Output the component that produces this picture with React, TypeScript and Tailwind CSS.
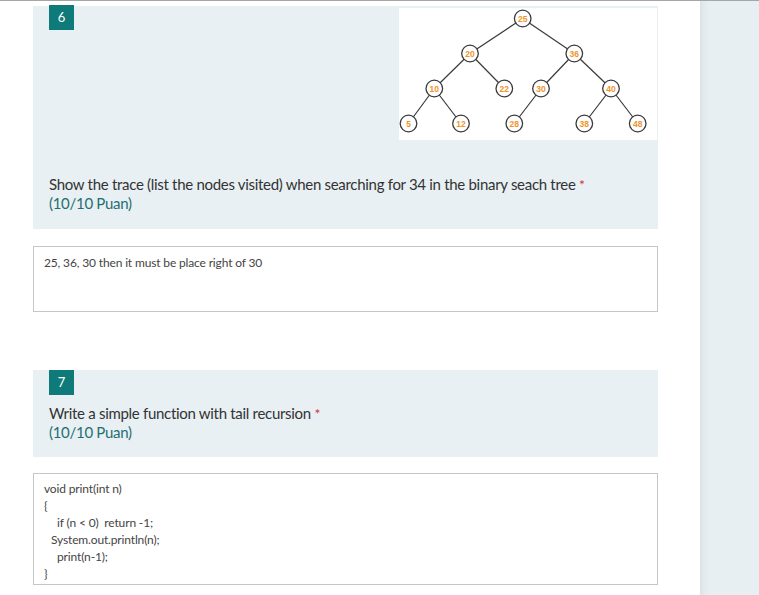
import React from 'react';

const nodes: { v: string; x: number; y: number }[] = [
  { v: '25', x: 123.7, y: 10.5 },
  { v: '20', x: 71, y: 45.5 },
  { v: '36', x: 175.3, y: 45.5 },
  { v: '10', x: 35.3, y: 80.5 },
  { v: '22', x: 105.3, y: 80.5 },
  { v: '30', x: 142, y: 80.5 },
  { v: '40', x: 212, y: 80.5 },
  { v: '5', x: 9.5, y: 115.5 },
  { v: '12', x: 62, y: 115.5 },
  { v: '28', x: 115.3, y: 115.5 },
  { v: '38', x: 185.3, y: 115.5 },
  { v: '48', x: 238.7, y: 115.5 },
];

const edges: [string, string][] = [
  ['25', '20'], ['25', '36'], ['20', '10'], ['20', '22'], ['36', '30'], ['36', '40'],
  ['10', '5'], ['10', '12'], ['30', '28'], ['40', '38'], ['40', '48'],
];

function Tree() {
  const at = (v: string) => nodes.find((n) => n.v === v)!;
  return (
    <svg width="258" height="132" viewBox="0 0 258 132" className="block bg-white">
      {edges.map(([a, b]) => (
        <line key={a + b} x1={at(a).x} y1={at(a).y} x2={at(b).x} y2={at(b).y} stroke="#3a3a3a" strokeWidth="1.2" />
      ))}
      {nodes.map((n) => (
        <g key={n.v}>
          <circle cx={n.x} cy={n.y} r="8.3" fill="#fff" stroke="#3a3a3a" strokeWidth="1.3" />
          <text
            x={n.x}
            y={n.y + 3}
            textAnchor="middle"
            fontSize="8.5"
            fontWeight="700"
            fill="#f0932b"
            fontFamily="'Liberation Sans', Arial, sans-serif"
          >
            {n.v}
          </text>
        </g>
      ))}
    </svg>
  );
}

function Badge({ n }: { n: string }) {
  return (
    <div className="ml-4 w-[25px] h-[25px] bg-[#0e7a7a] text-white text-[13px] flex items-center justify-center">
      {n}
    </div>
  );
}

function Title({ text }: { text: string }) {
  return (
    <div className="pl-4 text-[15px] leading-[19px] tracking-[-0.3px] text-[#333]">
      <div className="whitespace-nowrap">
        {text} <span className="text-[#d13438] text-[14px] leading-[0]">*</span>
      </div>
      <div className="text-[#1f6f72]">(10/10 Puan)</div>
    </div>
  );
}

export default function App() {
  return (
    <div className="min-h-screen flex bg-white border-t border-[#a6a6a6] font-['Lato','Noto_Sans',sans-serif]">
      <main className="w-[700px] shrink-0 pl-[33px] pr-[42px] pt-[4px]">
        {/* Question 6 */}
        <section className="bg-[#e8f0f3] pb-[16px] mt-[1px]">
          <div className="flex justify-between items-start">
            <div className="-mt-[1px]">
              <Badge n="6" />
            </div>
            <div className="mt-[2px] mr-[1px]">
              <Tree />
            </div>
          </div>
          <div className="mt-[35px]">
            <Title text="Show the trace (list the nodes visited) when searching for 34 in the binary seach tree" />
          </div>
        </section>

        <div className="mt-[17px] h-[66px] border border-[#c6c6c6] px-[10px] pt-[7px] text-[12px] leading-[17px] tracking-[-0.15px] text-[#444]">
          25, 36, 30 then it must be place right of 30
        </div>

        {/* Question 7 */}
        <section className="mt-[58px] bg-[#e8f0f3] pb-[15px]">
          <Badge n="7" />
          <div className="mt-[9px]">
            <Title text="Write a simple function with tail recursion" />
          </div>
        </section>

        <div className="mt-[16px] h-[112px] border border-[#c6c6c6] px-[10px] pt-[6px] text-[12px] leading-[17px] tracking-[-0.15px] text-[#444]">
          <div>void print(int n)</div>
          <div>{'{'}</div>
          <div className="pl-[13px]">if (n &lt; 0)&nbsp; return -1;</div>
          <div className="pl-[7px]">System.out.println(n);</div>
          <div className="pl-[13px]">print(n-1);</div>
          <div>{'}'}</div>
        </div>
      </main>
      <aside className="flex-1 bg-[#e7eff2] shadow-[inset_10px_0_8px_-8px_rgba(0,0,0,0.07)]" />
    </div>
  );
}
